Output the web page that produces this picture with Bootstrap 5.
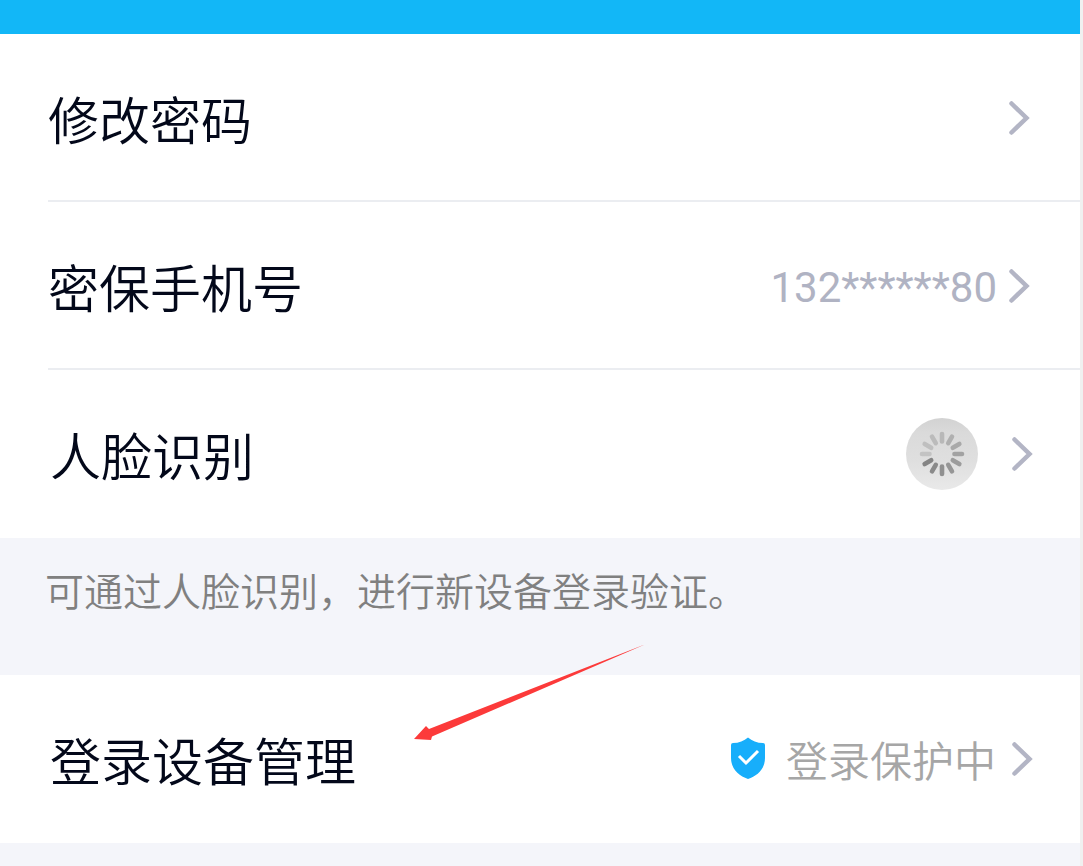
<!DOCTYPE html>
<html lang="zh-CN">
<head>
<meta charset="utf-8">
<meta name="viewport" content="width=device-width, initial-scale=1">
<title>账号安全</title>
<link href="https://cdn.jsdelivr.net/npm/bootstrap@5.3.0/dist/css/bootstrap.min.css" rel="stylesheet">
<style>
body{font-family:"Noto Sans CJK SC",sans-serif;font-weight:350;background:#f4f5fa;color:#03081a}
.screen{border-right:3px solid #f0f0f0}
.top-strip{height:34px;background:#12b7f7}
.setting{height:168px;padding:0 49px 0 48px;color:inherit;text-decoration:none;font-size:51px;line-height:60px}
.setting:hover{background:#fafafc}
.setting.with-status{padding:0 46px 0 50px}
.divided::after{content:"";position:absolute;left:48px;right:0;bottom:0;height:2px;background:#ebedf1}
.phone{font-family:Roboto,sans-serif;font-size:42px;font-weight:400;color:#b0b3c3;line-height:52px;padding-top:4px;margin-right:10px}
.state{font-size:42px;color:#a6a6a6;line-height:52px;margin:0 14px 0 18px}
.hint{height:137px;padding:21px 45px;font-size:39px;line-height:60px;color:#808080}
.pointer{left:414px;top:-30px;pointer-events:none}
</style>
</head>
<body>
<svg class="d-none" aria-hidden="true">
<symbol id="chevron" viewBox="0 0 24 36"><path d="M4.500 3.500 19.500 18 4.500 32.500" fill="none" stroke="#b3b5c5" stroke-width="4.500" stroke-linecap="round" stroke-linejoin="miter"/></symbol>
</svg>
<div class="screen min-vh-100">
<header class="top-strip"></header>
<main>
<nav class="bg-white" aria-label="账号">
<a href="#password" class="setting divided position-relative d-flex align-items-center justify-content-between">
<span>修改密码</span>
<svg width="24" height="36"><use href="#chevron"/></svg>
</a>
<a href="#phone" class="setting divided position-relative d-flex align-items-center justify-content-between">
<span>密保手机号</span>
<span class="d-flex align-items-center"><span class="phone">132******80</span><svg width="24" height="36"><use href="#chevron"/></svg></span>
</a>
<a href="#face" class="setting with-status d-flex align-items-center justify-content-between">
<span>人脸识别</span>
<span class="d-flex align-items-center">
<svg class="me-4" width="80" height="72" viewBox="0 0 80 72" role="img" aria-label="加载中">
<defs><linearGradient id="disc" x2="0" y2="1"><stop stop-color="#d2d2d2"/><stop offset=".2" stop-color="#dadada"/><stop offset=".6" stop-color="#dfdfdf"/><stop offset="1" stop-color="#e9e9e9"/></linearGradient></defs>
<circle cx="36" cy="36" r="36" fill="url(#disc)"/>
<g fill="none" stroke-width="4.600" stroke-linecap="round">
<path d="M36 16v7.500" stroke="#b8b8b8"/>
<path d="M36 16v7.500" stroke="#b0b0b0" transform="rotate(30 36 36)"/>
<path d="M36 16v7.500" stroke="#a9a9a9" transform="rotate(60 36 36)"/>
<path d="M36 16v7.500" stroke="#a2a2a2" transform="rotate(90 36 36)"/>
<path d="M36 16v7.500" stroke="#9c9c9c" transform="rotate(120 36 36)"/>
<path d="M36 16v7.500" stroke="#969696" transform="rotate(150 36 36)"/>
<path d="M36 16v7.500" stroke="#909090" transform="rotate(180 36 36)"/>
<path d="M36 16v7.500" stroke="#8a8a8a" transform="rotate(210 36 36)"/>
<path d="M36 16v7.500" stroke="#848484" transform="rotate(240 36 36)"/>
<path d="M36 16v7.500" stroke="#c3c3c3" transform="rotate(270 36 36)"/>
<path d="M36 16v7.500" stroke="#bfbfbf" transform="rotate(300 36 36)"/>
<path d="M36 16v7.500" stroke="#bbbbbb" transform="rotate(330 36 36)"/>
</g></svg>
<svg width="24" height="36"><use href="#chevron"/></svg></span>
</a>
</nav>
<p class="hint mb-0">可通过人脸识别，进行新设备登录验证。</p>
<section class="bg-white position-relative">
<a href="#devices" class="setting with-status d-flex align-items-center justify-content-between">
<span>登录设备管理</span>
<span class="d-flex align-items-center">
<svg width="40" height="44" viewBox="0 0 40 44" aria-hidden="true"><path d="M20 .5C24 4 29 6 35 6Q37 6 37 8V21C37 32 29 39 20 42C11 39 3 32 3 21V8Q3 6 5 6C11 6 16 4 20 .5Z" fill="#17aefb"/><path d="m11 19 7 7L30 14" fill="none" stroke="#fff" stroke-width="3"/></svg>
<span class="state">登录保护中</span>
<svg width="24" height="36"><use href="#chevron"/></svg></span>
</a>
<svg class="pointer position-absolute" width="232" height="96" viewBox="0 0 232 96" aria-hidden="true"><path d="M0 94 12 81 15 84 232 -1 18 91.500 17 95Z" fill="#fc3a3a"/></svg>
</section>
</main>
</div>
<script src="https://cdn.jsdelivr.net/npm/bootstrap@5.3.0/dist/js/bootstrap.bundle.min.js"></script>
</body>
</html>
